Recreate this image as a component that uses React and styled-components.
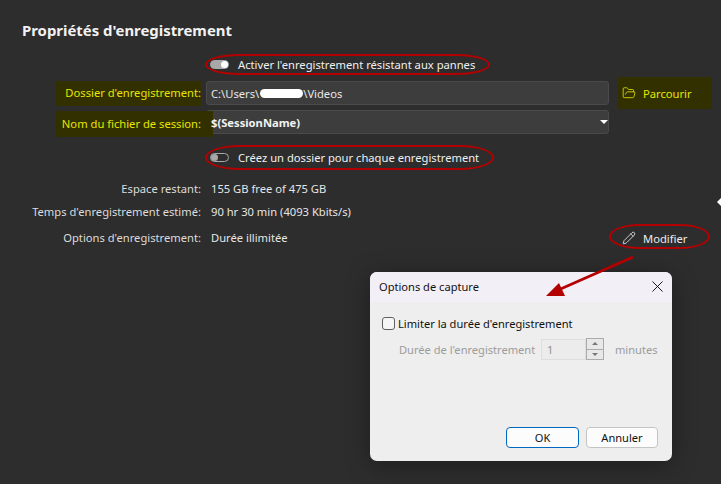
import React from 'react'
import styled, { createGlobalStyle } from 'styled-components'
import { FolderOpen, Pencil, X } from 'lucide-react'

const GlobalStyle = createGlobalStyle`
  html, body { margin: 0; padding: 0; background: #2d2d2d; }
  * { box-sizing: border-box; }
`

const Page = styled.div`
  position: relative;
  width: 721px;
  height: 484px;
  overflow: hidden;
  padding: 20px 0 0 22px;
  background: #2d2d2d;
  color: #e6e6e6;
  font-family: "Noto Sans", "Open Sans", sans-serif;
  font-size: 11.2px;
`

const Title = styled.h1`
  margin: 0 0 12px;
  font-size: 14.9px;
  line-height: 20px;
  font-weight: 700;
  color: #f2f2f2;
`

const Form = styled.div`
  display: grid;
  grid-template-columns: 179px 403px 94px;
  column-gap: 5px;
  grid-template-rows: 24px 24px 24px 36px 18px 18px 24px;
  row-gap: 5px;
`

const Label = styled.div`
  grid-column: 1;
  display: flex;
  align-items: center;
  justify-content: flex-end;
  padding-bottom: 2px;
  white-space: nowrap;
  color: #dcdcdc;
`

const MarkedLabel = styled(Label)`
  position: relative;
  z-index: 1;
  justify-self: end;
  height: ${p => p.$height}px;
  margin-top: ${p => p.$top}px;
  padding: 0 ${p => p.$over}px 2px ${p => p.$lead}px;
  margin-right: -${p => p.$over}px;
  background: #333000;
  color: #e6e600;
`

const Value = styled.div`
  grid-column: 2;
  display: flex;
  align-items: center;
  padding: 0 0 2px 5px;
  white-space: nowrap;
`

const ToggleRow = styled.div`
  grid-column: 2 / 4;
  display: flex;
  align-items: center;
  padding-left: 4px;
  color: #f0f0f0;
`

const Ringed = styled.span`
  position: relative;
  display: inline-flex;
  align-items: center;
  gap: 9px;
  &::after {
    content: '';
    position: absolute;
    top: ${p => p.$top}px;
    bottom: ${p => p.$top}px;
    left: -5px;
    right: -15px;
    border: 2.5px solid #b30000;
    border-radius: 34px / 50%;
  }
`

const Toggle = styled.span`
  position: relative;
  display: block;
  width: 19px;
  height: 9px;
  border-radius: 5px;
  border: 1px solid #a8a8a8;
  background: ${p => (p.$on ? '#a8a8a8' : 'transparent')};
  &::after {
    content: '';
    position: absolute;
    top: 0;
    ${p => (p.$on ? 'right: 0;' : 'left: 0;')}
    width: 7px;
    height: 7px;
    border-radius: 50%;
    background: ${p => (p.$on ? '#ffffff' : '#a8a8a8')};
  }
`

const Field = styled.div`
  grid-column: 2;
  position: relative;
  display: flex;
  align-items: center;
  height: 24px;
  padding-left: 4px;
  background: #3d3d3d;
  border: 1px solid #4a4a4a;
  border-radius: 3px;
  color: #e8e8e8;
  white-space: nowrap;
`

const Scribble = styled.span`
  display: inline-block;
  width: 43px;
  height: 9px;
  margin-left: 1px;
  background: #ffffff;
  border-radius: 5px;
`

const ComboText = styled.span`
  position: relative;
  z-index: 2;
  font-weight: 700;
  color: #f2f2f2;
`

const Caret = styled.span`
  position: absolute;
  right: 0px;
  top: 9px;
  width: 0;
  height: 0;
  border-left: 4px solid transparent;
  border-right: 4px solid transparent;
  border-top: 4px solid #ffffff;
`

const BrowseButton = styled.div`
  grid-column: 3;
  grid-row: 2;
  align-self: start;
  display: flex;
  align-items: center;
  gap: 7px;
  width: 94px;
  height: 32px;
  margin: -4px 0 0 4px;
  padding-left: 4px;
  background: #333000;
  color: #e6e600;
`

const EditButton = styled.div`
  grid-column: 3;
  position: relative;
  display: flex;
  align-items: center;
  gap: 7px;
  padding-left: 8px;
  color: #ececec;
  &::after {
    content: '';
    position: absolute;
    top: -2px;
    bottom: 1px;
    left: -5px;
    right: -2px;
    border: 2.5px solid #b30000;
    border-radius: 30px / 50%;
  }
`

const Cursor = styled.span`
  position: absolute;
  top: 198px;
  right: 0;
  width: 4px;
  height: 8px;
  background: #ffffff;
  clip-path: polygon(100% 0, 0 50%, 100% 100%);
`

const Dialog = styled.div`
  position: absolute;
  left: 370px;
  top: 272px;
  width: 302px;
  height: 189px;
  display: flex;
  flex-direction: column;
  background: #eeeeee;
  border-radius: 7px;
  overflow: hidden;
  box-shadow: 0 4px 24px rgba(0, 0, 0, 0.35);
  color: #111111;
  font-size: 11.1px;
`

const DialogHeader = styled.div`
  display: flex;
  align-items: center;
  justify-content: space-between;
  height: 30px;
  padding: 0 5px 2px 9px;
  background: #f3eff7;
`

const DialogBody = styled.div`
  flex: 1;
  display: flex;
  flex-direction: column;
  padding: 14px 14px 13px 12px;
`

const CheckRow = styled.div`
  display: flex;
  align-items: center;
  gap: 3px;
  height: 14px;
`

const CheckBox = styled.span`
  width: 13px;
  height: 13px;
  border: 1px solid #5f5f5f;
  border-radius: 3px;
  background: #f6f6f6;
`

const DurationRow = styled.div`
  display: flex;
  align-items: center;
  height: 22px;
  margin-top: 8px;
  padding-left: 17px;
  color: #9c9c9c;
`

const DurationLabel = styled.span`
  width: 142px;
  white-space: nowrap;
`

const SpinInput = styled.span`
  display: flex;
  align-items: center;
  width: 45px;
  height: 21px;
  padding-left: 5px;
  background: #ececec;
  border: 1px solid #dedede;
  color: #8f8f8f;
`

const Spinner = styled.span`
  display: flex;
  flex-direction: column;
  width: 18px;
  height: 22px;
  margin-right: 11px;
  border: 1px solid #ababab;
  background: #ababab;
  gap: 1px;
`

const SpinPart = styled.span`
  flex: 1;
  display: flex;
  align-items: center;
  justify-content: center;
  background: #e8e8e8;
  &::after {
    content: '';
    border-left: 3px solid transparent;
    border-right: 3px solid transparent;
    ${p => (p.$down ? 'border-top: 3px solid #777;' : 'border-bottom: 3px solid #777;')}
  }
`

const DialogFooter = styled.div`
  margin-top: auto;
  display: flex;
  justify-content: flex-end;
  gap: 7px;
`

const DialogButton = styled.div`
  display: flex;
  align-items: center;
  justify-content: center;
  width: ${p => (p.$primary ? 73 : 72)}px;
  height: 21px;
  background: #fcfcfc;
  border: 1px solid ${p => (p.$primary ? '#0067c0' : '#c4c4c4')};
  border-radius: 4px;
  color: #111111;
`

const ArrowSvg = styled.svg`
  position: absolute;
  left: 540px;
  top: 250px;
  width: 100px;
  height: 52px;
`

export default function App() {
  return (
    <Page>
      <GlobalStyle />
      <Title>Propriétés d'enregistrement</Title>
      <Form>
        <ToggleRow>
          <Ringed $top={-3}>
            <Toggle $on />
            Activer l'enregistrement résistant aux pannes
          </Ringed>
        </ToggleRow>

        <MarkedLabel $over={0} $lead={9} $top={0} $height={25}>Dossier d'enregistrement:</MarkedLabel>
        <Field>C:\Users\<Scribble />\Videos</Field>
        <BrowseButton>
          <FolderOpen size={14} strokeWidth={1.4} />
          Parcourir
        </BrowseButton>

        <MarkedLabel $over={12} $lead={6} $top={1} $height={26}>Nom du fichier de session:</MarkedLabel>
        <Field>
          <ComboText>$(SessionName)</ComboText>
          <Caret />
        </Field>

        <ToggleRow>
          <Ringed $top={-5}>
            <Toggle />
            Créez un dossier pour chaque enregistrement
          </Ringed>
        </ToggleRow>

        <Label>Espace restant:</Label>
        <Value>155 GB free of 475 GB</Value>
        <Label>Temps d'enregistrement estimé:</Label>
        <Value>90 hr 30 min (4093 Kbits/s)</Value>
        <Label>Options d'enregistrement:</Label>
        <Value>Durée illimitée</Value>
        <EditButton>
          <Pencil size={14} strokeWidth={1.4} />
          Modifier
        </EditButton>
      </Form>

      <Cursor />

      <Dialog>
        <DialogHeader>
          Options de capture
          <X size={19} strokeWidth={1.2} />
        </DialogHeader>
        <DialogBody>
          <CheckRow>
            <CheckBox />
            Limiter la durée d'enregistrement
          </CheckRow>
          <DurationRow>
            <DurationLabel>Durée de l'enregistrement</DurationLabel>
            <SpinInput>1</SpinInput>
            <Spinner>
              <SpinPart />
              <SpinPart $down />
            </Spinner>
            minutes
          </DurationRow>
          <DialogFooter>
            <DialogButton $primary>OK</DialogButton>
            <DialogButton>Annuler</DialogButton>
          </DialogFooter>
        </DialogBody>
      </Dialog>

      <ArrowSvg viewBox="0 0 100 52">
        <line x1="93" y1="7" x2="16" y2="41" stroke="#b30000" strokeWidth="2.8" />
        <polygon points="6,46 19,33 25,46" fill="#b30000" />
      </ArrowSvg>
    </Page>
  )
}
